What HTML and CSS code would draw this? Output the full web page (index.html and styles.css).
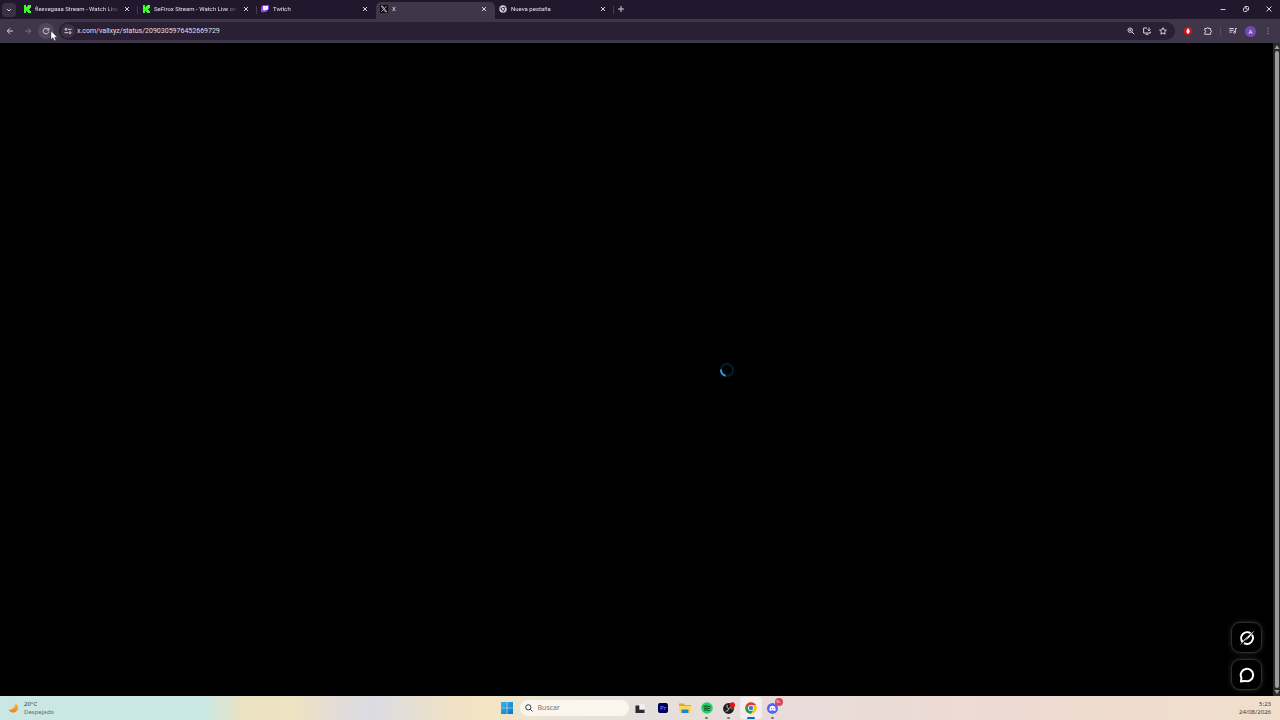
FILE: index.html
```html
<!DOCTYPE html>
<html lang="es">
<head>
    <meta charset="UTF-8">
    <meta name="viewport" content="width=device-width, initial-scale=1.0">
    <title>X</title>
    <link rel="stylesheet" href="styles.css">
</head>
<body>
    <!-- Pestañas -->
    <header class="tabs">
        <button class="tab-search" aria-label="Buscar pestañas">
            <svg viewBox="0 0 8 8"><path d="M2 3l2 2 2-2"/></svg>
        </button>
        <nav class="tab-list">
            <div class="tab">
                <svg class="favicon" viewBox="0 0 8 8"><path fill="#3fff2a" d="M1 0h2v2h1V1h1V0h3v3H7v1H6v1h1v1h1v2H5V7H4V6H3v2H1z"/></svg>
                <a class="tab-title" href="#">flexvegaaa Stream - Watch Live</a>
                <button class="tab-close" aria-label="Cerrar"><svg viewBox="0 0 8 8"><path d="M2 2l4 4M6 2l-4 4"/></svg></button>
            </div>
            <div class="tab">
                <svg class="favicon" viewBox="0 0 8 8"><path fill="#3fff2a" d="M1 0h2v2h1V1h1V0h3v3H7v1H6v1h1v1h1v2H5V7H4V6H3v2H1z"/></svg>
                <a class="tab-title" href="#">SeFirox Stream - Watch Live on</a>
                <button class="tab-close" aria-label="Cerrar"><svg viewBox="0 0 8 8"><path d="M2 2l4 4M6 2l-4 4"/></svg></button>
            </div>
            <div class="tab tab-before">
                <svg class="favicon" viewBox="0 0 8 8"><path fill="#8c44f7" d="M2 0L0 2v5h2v1l1-1h2l3-3V0z"/><path fill="#f3eaff" d="M2 1h5v3L6 5H4L3 6V5H2z"/></svg>
                <a class="tab-title" href="#">Twitch</a>
                <button class="tab-close" aria-label="Cerrar"><svg viewBox="0 0 8 8"><path d="M2 2l4 4M6 2l-4 4"/></svg></button>
            </div>
            <div class="tab tab-active">
                <svg class="favicon" viewBox="0 0 8 8"><path fill="#0a0a0a" d="M0 0h8v8H0z"/><path fill="none" stroke="#ddd" stroke-width=".8" d="M1.300 1.200h1.400l4 5.600H5.300zM6.500 1.200L4.500 3.500M3.500 4.600L1.400 6.800"/></svg>
                <a class="tab-title" href="#">X</a>
                <button class="tab-close" aria-label="Cerrar"><svg viewBox="0 0 8 8"><path d="M2 2l4 4M6 2l-4 4"/></svg></button>
            </div>
            <div class="tab">
                <svg class="favicon" viewBox="0 0 8 8"><circle cx="4" cy="4" r="3.700" fill="#d9d5de"/><circle cx="4" cy="4" r="1.600" fill="#d9d5de" stroke="#2a2038" stroke-width=".8"/><path stroke="#2a2038" stroke-width=".6" d="M4 2.300h3.400M2.500 4.800L.9 2.200M5.400 5L3.700 7.700"/></svg>
                <a class="tab-title" href="#">Nueva pestaña</a>
                <button class="tab-close" aria-label="Cerrar"><svg viewBox="0 0 8 8"><path d="M2 2l4 4M6 2l-4 4"/></svg></button>
            </div>
        </nav>
        <button class="tab-new" aria-label="Nueva pestaña"><svg viewBox="0 0 8 8"><path d="M4 1v6M1 4h6"/></svg></button>
        <div class="window-buttons">
            <button aria-label="Minimizar"><svg viewBox="0 0 8 8"><path d="M1.500 4.500h5"/></svg></button>
            <button aria-label="Restaurar"><svg viewBox="0 0 8 8"><rect x="1.500" y="3" width="3.500" height="3.500" rx=".8"/><path d="M3 2.700V1.500h2.500q1 0 1 1V5H5.500"/></svg></button>
            <button aria-label="Cerrar ventana"><svg viewBox="0 0 8 8"><path d="M1.500 1.500l5 5M6.500 1.500l-5 5"/></svg></button>
        </div>
    </header>

    <!-- Barra de navegación -->
    <div class="toolbar">
        <div class="tools tools-nav">
            <button class="tool" aria-label="Atrás"><svg viewBox="0 0 8 8"><path d="M7 4H1.300M4 1.200L1.200 4 4 6.800"/></svg></button>
            <button class="tool tool-off" aria-label="Adelante"><svg viewBox="0 0 8 8"><path d="M1 4h5.700M4 1.200L6.800 4 4 6.800"/></svg></button>
            <button class="tool tool-reload" aria-label="Recargar">
                <svg viewBox="0 0 8 8"><path d="M6.400 2.600A2.800 2.800 0 1 0 6.800 4.400M6.800 1v2H4.700"/></svg>
                <svg class="cursor" viewBox="0 0 8 12"><path d="M1 1v8.500l2-1.800 1.300 3 1.500-.7-1.300-2.800H7.300z"/></svg>
            </button>
        </div>
        <div class="address">
            <button class="site-info" aria-label="Información del sitio"><svg viewBox="0 0 8 8"><circle cx="2" cy="2.300" r="1"/><path d="M4 2.300h3.500M.5 5.700H4"/><circle cx="6" cy="5.700" r="1"/></svg></button>
            <input class="url" type="text" aria-label="Dirección" value="x.com/vallxyz/status/2090305976452669729">
            <button class="tool" aria-label="Zoom"><svg viewBox="0 0 8 8"><circle cx="3.200" cy="3.200" r="2.200"/><path d="M5 5l2.300 2.300M2.200 3.200h2M3.200 2.200v2"/></svg></button>
            <button class="tool" aria-label="Instalar"><svg viewBox="0 0 8 8"><path d="M4 1H.6v5h6.800V4.700M2.500 7.300h3M6 .5v3.200M4.600 2.500L6 3.900l1.400-1.400"/></svg></button>
            <button class="tool" aria-label="Favoritos"><svg viewBox="0 0 8 8"><path d="M4 .7l1 2.200 2.400.3-1.800 1.600.5 2.400L4 6 1.900 7.200l.5-2.400L.6 3.200 3 2.900z"/></svg></button>
        </div>
        <div class="tools">
            <button class="tool" aria-label="Bloqueador"><svg viewBox="0 0 8 8"><path fill="#d80d1c" stroke="none" d="M2.300 0h3.400L8 2.300v3.400L5.700 8H2.300L0 5.700V2.300z"/><path fill="#fff" stroke="none" d="M2.500 3h.6V1.800h.7v-.4h.7v.5h.7v2l.6-.2.1.6-1.200 2.300H3.200l-.7-1.300z"/></svg></button>
            <button class="tool" aria-label="Extensiones"><svg viewBox="0 0 8 8"><path d="M.8 1.500h2q0-1 .9-1t.9 1h2v2q1 0 1 .9t-1 .9v2H.8v-2q1 0 1-.9t-1-.9z"/></svg></button>
            <span class="divider"></span>
            <button class="tool" aria-label="Multimedia"><svg viewBox="0 0 8 8"><path d="M.3 1.500h4.400M.3 3.300h4.400M.3 5.100h2.500M6.400 5.300V1.500h1.500"/><circle cx="5.500" cy="5.400" r=".9"/></svg></button>
            <button class="avatar">A</button>
            <button class="tool" aria-label="Menú"><svg viewBox="0 0 8 8"><path stroke-linecap="round" d="M4 1.300v.01M4 4v.01M4 6.700v.01"/></svg></button>
        </div>
    </div>

    <!-- Contenido de la página -->
    <main class="page">
        <div class="view">
            <svg class="spinner" viewBox="0 0 16 16"><circle cx="8" cy="8" r="6" stroke="#071e2e"/><path stroke="#2f9be8" d="M2 7.500a6 6 0 0 0 4.500 6.300"/></svg>
            <div class="float-buttons">
                <button aria-label="Grok"><svg viewBox="0 0 16 16"><path d="M11.600 3.200A6 6 0 0 0 3.600 12M5 13.200A6 6 0 0 0 13 4.800"/><path fill="#fff" stroke="none" d="M.3 15.700L5.500 9.300 15.700.3 10.500 7.200 6.200 10.900 9.500 6.500z"/></svg></button>
                <button aria-label="Mensajes"><svg viewBox="0 0 16 16"><path d="M2 14.300L2.400 10.800A6.200 6.200 0 1 1 6 13.900z"/></svg></button>
            </div>
        </div>
        <div class="scrollbar">
            <svg viewBox="0 0 6 6"><path d="M3 1l2.500 4h-5z"/></svg>
            <span class="thumb"></span>
            <svg viewBox="0 0 6 6"><path d="M3 5L.5 1h5z"/></svg>
        </div>
    </main>

    <!-- Barra de tareas -->
    <footer class="taskbar">
        <button class="weather">
            <svg viewBox="0 0 12 12"><defs><linearGradient id="moon" x2="0" y2="1"><stop stop-color="#ffc84a"/><stop offset="1" stop-color="#e68416"/></linearGradient></defs><path fill="url(#moon)" d="M7.500.8a5.500 5.500 0 1 1-7 7.400C4 9 8.500 5.800 7.500.8z"/></svg>
            <span>20°C<small>Despejado</small></span>
        </button>
        <div class="apps">
            <button class="app" aria-label="Inicio"><svg viewBox="0 0 12 12"><defs><linearGradient id="win" x2="1" y2="1"><stop stop-color="#38b6ea"/><stop offset="1" stop-color="#0874c9"/></linearGradient></defs><path fill="url(#win)" d="M0 0h5.700v5.700H0zM6.300 0H12v5.700H6.300zM0 6.300h5.700V12H0zM6.300 6.300H12V12H6.300z"/></svg></button>
            <label class="search">
                <svg viewBox="0 0 8 8"><circle cx="3.300" cy="3.300" r="2.600"/><path d="M5.200 5.200l2.200 2.200"/></svg>
                <input type="text" placeholder="Buscar" aria-label="Buscar">
            </label>
            <button class="app" aria-label="Vista de tareas"><svg viewBox="0 0 12 12"><path fill="#efefef" stroke="#c6c4c2" stroke-width=".4" d="M3 1h7.500v7H3z"/><path fill="#2a2a2a" d="M.5 3.500h3.800v4.200h5.200V11h-9z"/></svg></button>
            <button class="app" aria-label="Premiere Pro"><svg viewBox="0 0 12 12"><rect x="1" y="1" width="10" height="10" rx="2" fill="#00005b"/><text x="3" y="8" font-size="6" fill="#9999ff">Pr</text></svg></button>
            <button class="app" aria-label="Explorador"><svg viewBox="0 0 12 12"><path fill="#e5a524" d="M0 1.500h4.500L6 3h6v3H0z"/><path fill="#ffd75b" d="M0 4h12v7H0z"/><path fill="#1686cf" d="M2.500 7.500h7V11h-7z"/></svg></button>
            <button class="app app-open" aria-label="Spotify"><svg viewBox="0 0 12 12"><circle cx="6" cy="6" r="5.800" fill="#1ed760"/><path fill="none" stroke="#12341e" stroke-linecap="round" d="M2.800 4.200q3.500-1 6.500.6M3.200 6.200q3-.8 5.500.6M3.500 8q2.600-.6 4.500.5"/></svg></button>
            <button class="app app-open" aria-label="OBS"><svg viewBox="0 0 12 12"><circle cx="5.500" cy="6.500" r="5.400" fill="#1f1f20"/><path fill="none" stroke="#c9c9c9" stroke-width=".9" d="M5.500 6.500Q3 5.500 4.200 2.900M5.500 6.500Q8 4.500 9.500 7M5.500 6.500Q5.700 9.500 2.700 9.300"/><circle cx="9.300" cy="2.900" r="2.700" fill="#e3131c"/></svg></button>
            <button class="app app-current" aria-label="Chrome"><svg viewBox="0 0 12 12"><circle cx="6" cy="6" r="5.800" fill="#fbc116"/><path fill="#e33b2e" d="M1 3.100A5.800 5.800 0 0 1 11 3.100H6L3.400 7.300z"/><path fill="#229a4b" d="M1 3.100l2.500 4.300L8.500 7.500 6 11.800A5.800 5.800 0 0 1 1 3.100z"/><circle cx="6" cy="6" r="2.900" fill="#fff"/><circle cx="6" cy="6" r="2.200" fill="#3478e5"/></svg></button>
            <button class="app app-open" aria-label="Discord"><svg viewBox="0 0 12 12"><circle cx="5.500" cy="6.400" r="5.500" fill="#5865f2"/><path fill="#fff" d="M3.500 4.200q2-.7 4 0 1.300 1.800 1.200 4-1 .8-1.800.7L6.500 8.200h-2l-.4.7q-.8.1-1.800-.7-.1-2.200 1.200-4z"/><circle cx="4.400" cy="6.600" r=".6" fill="#5865f2"/><circle cx="6.600" cy="6.600" r=".6" fill="#5865f2"/></svg><span class="badge">9+</span></button>
        </div>
        <button class="clock">5:23<br>24/08/2026</button>
    </footer>
</body>
</html>
```
FILE: styles.css
```css
* {
    box-sizing: border-box;
}

body {
    margin: 0;
    height: 100vh;
    display: flex;
    flex-direction: column;
    overflow: hidden;
    background: #000;
    color: #e4dfea;
    font-family: Roboto, "Noto Sans", sans-serif;
    font-size: 6px;
}

button,
input {
    margin: 0;
    padding: 0;
    border: 0;
    background: none;
    color: inherit;
    font: inherit;
}

button {
    display: flex;
    align-items: center;
    justify-content: center;
    flex-shrink: 0;
}

a {
    color: inherit;
    text-decoration: none;
}

svg {
    display: block;
    flex-shrink: 0;
}

/* Pestañas */
.tabs {
    display: flex;
    align-items: center;
    height: 19px;
    flex-shrink: 0;
    background: #21182d;
}

.tabs button svg,
.tool svg,
.site-info svg {
    width: 8px;
    height: 8px;
    fill: none;
    stroke: #d5d0dc;
    stroke-width: 1;
}

.tab-search {
    width: 14px;
    height: 14px;
    margin: 0 3px 0 2px;
    border-radius: 4px;
    background: #3a3146;
}

.tab-list {
    display: flex;
    height: 100%;
}

.tab {
    display: flex;
    align-items: center;
    gap: 4px;
    width: 119px;
    padding: 0 7px 1px 4px;
    background: linear-gradient(#453b52, #453b52) right center / 1px 8px no-repeat;
}

.tab-before {
    background: none;
}

.tab-active {
    height: 17px;
    margin-top: 2px;
    padding-bottom: 3px;
    border-radius: 5px 5px 0 0;
    background: #3f364a;
}

.favicon {
    width: 8px;
    height: 8px;
}

.tab-title {
    flex: 1;
    overflow: hidden;
    white-space: nowrap;
    line-height: 10px;
    -webkit-mask-image: linear-gradient(90deg, #000 85%, transparent);
    mask-image: linear-gradient(90deg, #000 85%, transparent);
}

.tab-new {
    width: 14px;
    height: 18px;
    padding-bottom: 1px;
}

.window-buttons {
    display: flex;
    margin-left: auto;
}

.window-buttons button {
    width: 23px;
    height: 19px;
    padding-bottom: 1px;
}

/* Barra de navegación */
.toolbar {
    display: flex;
    align-items: center;
    gap: 5px;
    height: 24px;
    flex-shrink: 0;
    padding: 0 4px 0 2px;
    background: #3f364a;
}

.tools {
    display: flex;
    align-items: center;
    gap: 4px;
}

.tools-nav {
    gap: 2px;
}

.tool {
    position: relative;
    width: 16px;
    height: 16px;
    border-radius: 50%;
}

.tool-off {
    opacity: 0.4;
}

.tool-reload {
    background: #51485c;
}

.tool .cursor {
    position: absolute;
    left: 12px;
    top: 7px;
    z-index: 1;
    width: 8px;
    height: 12px;
    fill: #fff;
    stroke: #222;
    stroke-width: 0.4;
}

.address {
    display: flex;
    align-items: center;
    flex: 1;
    height: 18px;
    padding: 0 4px 0 2px;
    border-radius: 9px;
    background: #292133;
}

.site-info {
    width: 14px;
    height: 14px;
    border-radius: 50%;
    background: #3b3246;
}

.url {
    flex: 1;
    min-width: 0;
    height: 14px;
    padding-left: 2px;
    outline: 0;
    font-size: 7px;
}

.divider {
    width: 1px;
    height: 8px;
    background: #574d63;
}

.avatar {
    width: 11px;
    height: 11px;
    border-radius: 50%;
    background: #7149b5;
    color: #fff;
}

/* Página */
.page {
    display: flex;
    flex: 1;
    min-height: 0;
}

.view {
    position: relative;
    flex: 1;
}

.spinner {
    position: absolute;
    left: 57.1%;
    top: 50%;
    width: 16px;
    height: 16px;
    margin-top: -8px;
    margin-left: -8px;
    fill: none;
    stroke-width: 2;
}

.float-buttons {
    position: absolute;
    right: 11px;
    bottom: 6px;
    display: grid;
    gap: 6px;
}

.float-buttons button {
    width: 31px;
    height: 31px;
    border: 1px solid #2c2e30;
    border-radius: 9px;
    background: #000;
    box-shadow: 0 0 5px #2a2c2e;
}

.float-buttons svg {
    width: 16px;
    height: 16px;
    fill: none;
    stroke: #fff;
    stroke-width: 2;
}

.scrollbar {
    display: flex;
    flex-direction: column;
    align-items: center;
    gap: 1px;
    width: 7px;
    padding: 1px 0;
    background: #2b2b2b;
}

.scrollbar svg {
    width: 6px;
    height: 6px;
    fill: #a0a0a0;
}

.thumb {
    flex: 1;
    width: 4px;
    border-radius: 2px;
    background: #9c9c9c;
}

/* Barra de tareas */
.taskbar {
    display: grid;
    grid-template-columns: 1fr auto 1fr;
    align-items: center;
    height: 24px;
    flex-shrink: 0;
    padding: 0 9px 1px 8px;
    background: linear-gradient(90deg, #cbe7e4 16%, #ebe2c2 19%, #eee3c2 23%, #e4dcd6 26%, #dadce3 29%, #eee1c6 35%, #f3e6c3 38%, #e8e2d8 44%, #e5e0dd 50%, #e8dcda 60%, #eedad2 80%, #f1dfcb);
    color: #353a3a;
    font-family: "Noto Sans", sans-serif;
}

.weather {
    justify-self: start;
    gap: 5px;
    text-align: left;
    line-height: 8px;
}

.weather svg {
    width: 11px;
    height: 11px;
}

.weather small {
    display: block;
    color: #5d6b6b;
    font-size: 6px;
}

.apps {
    display: flex;
    align-items: center;
}

.app {
    position: relative;
    width: 22px;
    height: 22px;
}

.app > svg {
    width: 12px;
    height: 12px;
}

.app-open::after,
.app-current::after {
    content: "";
    position: absolute;
    bottom: 0;
    width: 3px;
    height: 2px;
    border-radius: 1px;
    background: #777;
}

.app-current {
    border-radius: 3px;
    background: rgba(255, 255, 255, 0.5);
}

.app-current::after {
    width: 8px;
    background: #1668c1;
}

.badge {
    position: absolute;
    right: 1px;
    top: 1px;
    width: 8px;
    height: 8px;
    border-radius: 50%;
    background: #d9445c;
    color: #fff;
    font-size: 4px;
    line-height: 8px;
}

.search {
    display: flex;
    align-items: center;
    gap: 5px;
    width: 109px;
    height: 16px;
    margin: 0 1px 0 2px;
    padding: 0 5px;
    border-radius: 8px;
    background: #faf6ee;
}

.search svg {
    width: 8px;
    height: 8px;
    fill: none;
    stroke: #3c3c3c;
}

.search input {
    flex: 1;
    min-width: 0;
    font-size: 7px;
}

.search input::placeholder {
    color: #77736e;
}

.clock {
    justify-self: end;
    text-align: right;
    line-height: 8px;
}
```
